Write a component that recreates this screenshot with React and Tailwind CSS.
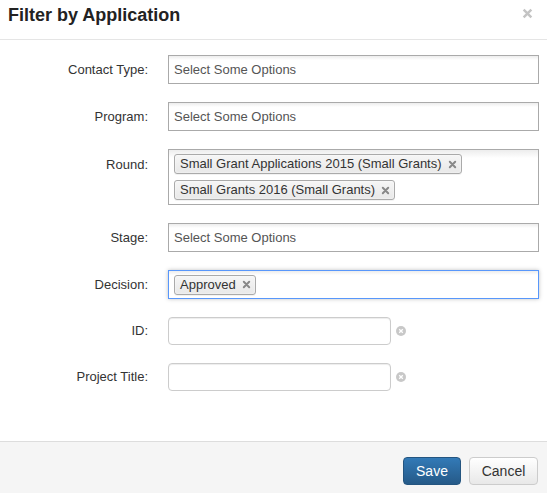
import React from "react";

const font = { fontFamily: '"Liberation Sans", Arial, sans-serif' };

const Tag = ({ children }) => (
  <span className="inline-flex items-center h-[20px] my-[3px] mr-[5px] pl-[5px] pr-[4px] rounded-[3px] border border-[#aaa] bg-gradient-to-b from-[#f6f6f6] to-[#e8e8e8] text-[13px] text-[#333] shadow-[0_0_2px_white_inset,0_1px_0_rgba(0,0,0,0.05)]">
    {children}
    <svg width="9" height="9" viewBox="0 0 10 10" className="ml-[6px]">
      <path d="M2 2 L8 8 M8 2 L2 8" stroke="#888" strokeWidth="2.2" strokeLinecap="round" />
    </svg>
  </span>
);

const Row = ({ label, children, top }) => (
  <div className={`flex ${top ? "items-start" : "items-center"}`}>
    <label className={`w-[148px] shrink-0 text-right text-[13px] text-[#333] ${top ? "pt-[6px]" : ""}`}>{label}</label>
    <div className="ml-[20px] flex-1 flex items-center">{children}</div>
  </div>
);

const Chosen = ({ children, focus }) => (
  <div
    className={`w-full min-h-[29px] flex flex-wrap items-center pl-[5px] pr-[5px] border bg-gradient-to-b from-[#eee] from-[1%] to-white to-[15%] ${
      focus ? "border-[#5897fb] shadow-[0_0_4px_rgba(0,0,0,0.25)]" : "border-[#aaa]"
    }`}
  >
    {children}
  </div>
);

const Placeholder = () => <span className="text-[13px] text-[#555]">Select Some Options</span>;

const ClearIcon = () => (
  <svg width="10" height="10" viewBox="0 0 10 10" className="ml-[5px]">
    <circle cx="5" cy="5" r="5" fill="#c8c8c8" />
    <path d="M3.2 3.2 L6.8 6.8 M6.8 3.2 L3.2 6.8" stroke="white" strokeWidth="1.3" />
  </svg>
);

const TextInput = () => (
  <div className="flex items-center">
    <input className="w-[223px] h-[28px] rounded-[4px] border border-[#ccc] bg-white shadow-[inset_0_1px_1px_rgba(0,0,0,0.075)] outline-none" />
    <ClearIcon />
  </div>
);

export default function App() {
  return (
    <div style={font} className="w-[547px] h-[493px] bg-white flex flex-col overflow-hidden">
      <div className="h-[40px] shrink-0 flex items-center justify-between pl-[8px] pr-[14px] border-b border-[#e5e5e5]">
        <h3 className="text-[18px] font-bold text-[#222] -mt-[8px]">Filter by Application</h3>
        <svg width="11" height="11" viewBox="0 0 10 10" className="-mt-[12px]">
          <path d="M1.5 1.5 L8.5 8.5 M8.5 1.5 L1.5 8.5" stroke="#c4c4c4" strokeWidth="2.2" />
        </svg>
      </div>

      <div className="flex-1 pt-[15px] pr-[8px] flex flex-col gap-[18px]">
        <Row label="Contact Type:">
          <Chosen><Placeholder /></Chosen>
        </Row>
        <Row label="Program:">
          <Chosen><Placeholder /></Chosen>
        </Row>
        <Row label="Round:" top>
          <div className="w-full min-h-[56px] flex flex-col items-start justify-center pl-[5px] border border-[#aaa] bg-gradient-to-b from-[#eee] from-[1%] to-white to-[15%]">
            <Tag>Small Grant Applications 2015 (Small Grants)</Tag>
            <Tag>Small Grants 2016 (Small Grants)</Tag>
          </div>
        </Row>
        <Row label="Stage:">
          <Chosen><Placeholder /></Chosen>
        </Row>
        <Row label="Decision:">
          <Chosen focus><Tag>Approved</Tag></Chosen>
        </Row>
        <Row label="ID:">
          <TextInput />
        </Row>
        <Row label="Project Title:">
          <TextInput />
        </Row>
      </div>

      <div className="h-[52px] shrink-0 border-t border-[#ddd] bg-[#f5f5f5] flex items-start justify-end gap-[8px] pt-[15px] pr-[9px]">
        <button className="w-[58px] h-[28px] rounded-[4px] border border-[#245580] bg-gradient-to-b from-[#337ab7] to-[#265a88] text-white text-[14px]">
          Save
        </button>
        <button className="w-[69px] h-[28px] rounded-[4px] border border-[#ccc] bg-gradient-to-b from-white to-[#e8e8e8] text-[#333] text-[14px]">
          Cancel
        </button>
      </div>
    </div>
  );
}
